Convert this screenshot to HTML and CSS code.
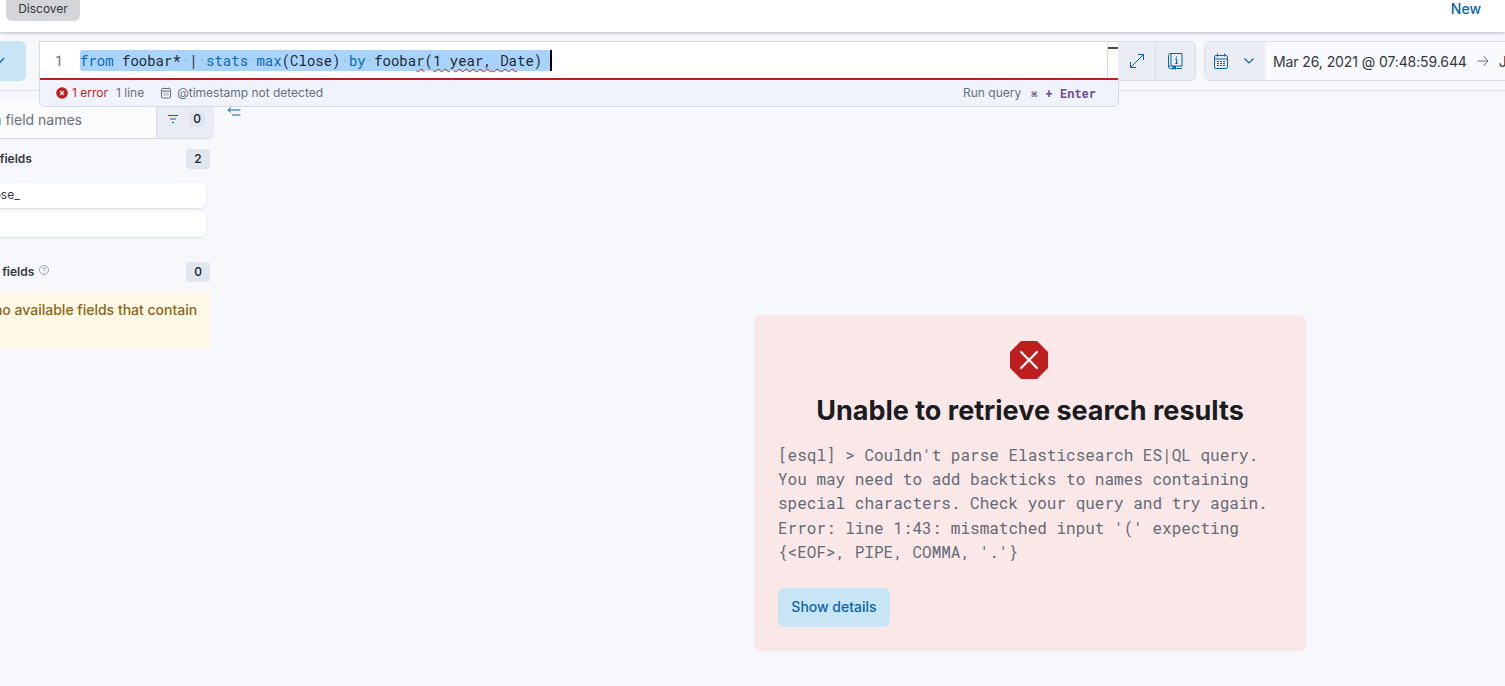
FILE: index.html
```html
<!DOCTYPE html>
<html lang="en">
<head>
<meta charset="utf-8">
<title>Discover</title>
<link rel="stylesheet" href="styles.css">
</head>
<body>
<header class="topbar">
  <span class="crumb">Discover</span>
  <a class="new-link">New</a>
</header>
<section class="toolbar">
  <button class="submit-stub">
    <svg width="16" height="16" viewBox="0 0 16 16"><path d="M1 10l4 4 8-9" fill="none" stroke="#0b64a8" stroke-width="1.2"/></svg>
  </button>
  <div class="editor">
    <div class="editor-main">
      <span class="gutter">1</span>
      <div class="code-wrap">
        <span class="code"><span class="kw">from</span><span class="ws">·</span>foobar*<span class="ws">·</span>|<span class="ws">·</span><span class="kw">stats</span><span class="ws">·</span><span class="kw">max</span>(Close)<span class="ws">·</span><span class="kw">by</span><span class="ws">·</span>fooba<span class="sq">r</span>(<span class="sq">1 year,<span class="ws">·</span>Da</span>te)<span class="ws">·</span></span><span class="caret"></span>
      </div>
      <div class="scroll-track"><span class="scroll-tick"></span></div>
    </div>
    <div class="editor-foot">
      <span class="err">
        <svg width="12" height="12" viewBox="0 0 12 12"><circle cx="6" cy="6" r="5.8" fill="#bd1f1f"/><path d="M4 4l4 4M8 4l-4 4" stroke="#fff" stroke-width="1.2"/></svg>
        1 error
      </span>
      <span class="foot-item">1 line</span>
      <span class="foot-item stamp">
        <svg width="12" height="12" viewBox="0 0 12 12" fill="none" stroke="#69707d"><rect x="1.5" y="1.5" width="9" height="9.5" rx="1"/><path d="M1.5 4h9M3.5 6h1M5.5 6h1M7.5 6h1M3.5 8h1M5.5 8h1M7.5 8h1M3.5.5v1.5M8.5.5v1.5"/></svg>
        @timestamp not detected
      </span>
      <span class="run">Run query <kbd class="keys"><span class="cmd">⌘</span> + Enter</kbd></span>
    </div>
  </div>
  <div class="btn-group">
    <button class="icon-btn wide">
      <svg width="16" height="16" viewBox="0 0 16 16" fill="none" stroke="#0b64a8"><path d="M1.5 14.5L14.5 1.5M9 1.5h5.5V7M1.5 9v5.5H7"/></svg>
    </button>
    <button class="icon-btn">
      <svg width="15" height="17" viewBox="0 0 15 17" fill="none" stroke="#0b64a8"><path d="M3 .5h11v12.500H3zM3 .5C1.500.5.500 1.200.500 2.500v11.500c0 .8.800 1.500 2 1.500h2M8.500 15.500h5.500M.500 14c0-.7 1.200-1 2.500-1"/><path d="M4.500 13h3.500v4l-1.750-1.300L4.500 17z" fill="#0b64a8" stroke="none"/><path d="M8.500 3.500v1.200M8.500 6v4.500M7.200 10.500h2.600M7.200 6h1.300" stroke-width="1.100"/></svg>
    </button>
  </div>
  <div class="date-picker">
    <div class="date-quick">
      <svg width="14" height="16" viewBox="0 0 14 16" fill="none" stroke="#0b64a8"><rect x=".5" y="2.500" width="13" height="13" rx="1.500"/><path d="M.5 6h13M3.500.5v3M10.500.5v3"/><path d="M3 8.500h2M6 8.500h2M9 8.500h2M3 10.500h2M6 10.500h2M9 10.500h2M3 12.500h2M6 12.500h2M9 12.500h2"/></svg>
      <svg width="10" height="6" viewBox="0 0 10 6" fill="none" stroke="#0b64a8" stroke-width="1.200"><path d="M.5.5L5 5 9.500.5"/></svg>
    </div>
    <div class="date-range">
      <span class="date-text">Mar 26, 2021 @ 07:48:59.644</span>
      <svg width="12" height="12" viewBox="0 0 12 12" fill="none" stroke="#69707d"><path d="M.5 6h10.500M6.500 1L11 6l-4.500 5"/></svg>
      <span class="date-text">Jan 1, 2024 @ 00:00:00.000</span>
    </div>
  </div>
</section>
<main class="content">
  <aside class="sidebar">
    <div class="search">
      <span class="search-input">Search field names</span>
      <div class="search-filter">
        <svg width="12" height="10" viewBox="0 0 12 10" fill="none" stroke="#0b64a8"><path d="M1 1.500h10M3 5h6M5 8.500h2"/></svg>
        <span class="filter-count">0</span>
      </div>
    </div>
    <div class="field-head first">
      <span class="field-title">Available fields</span>
      <span class="count-badge">2</span>
    </div>
    <div class="field-row">Close_</div>
    <div class="field-row"></div>
    <div class="field-head second">
      <span class="field-title">Empty fields</span>
      <svg class="help" width="10" height="10" viewBox="0 0 10 10" fill="none" stroke="#98a2b3"><circle cx="5" cy="5" r="4.500"/><path d="M3.700 4c0-1.700 2.700-1.700 2.700 0 0 .9-1.400 1-1.400 2M5 7v.8"/></svg>
      <span class="count-badge">0</span>
    </div>
    <div class="warn">There are no available fields that contain</div>
  </aside>
  <div class="main-pane">
    <svg class="collapse" width="14" height="10" viewBox="0 0 14 10" fill="none" stroke="#0b64a8"><path d="M13.500 3H1M4 .5L1 3l3 2.500M5 8h8.500"/></svg>
    <div class="error-card">
      <svg class="octagon" width="38" height="38" viewBox="0 0 38 38"><path d="M11 0h16l11 11v16L27 38H11L0 27V11z" fill="#bd1f1f"/><path d="M11 11l16 16M27 11L11 27" stroke="#fff" stroke-width="2.200" stroke-linecap="round"/></svg>
      <h1 class="error-title">Unable to retrieve search results</h1>
      <p class="error-body">[esql] &gt; Couldn't parse Elasticsearch ES|QL query.<br>You may need to add backticks to names containing<br>special characters. Check your query and try again.<br>Error: line 1:43: mismatched input '(' expecting<br>{&lt;EOF&gt;, PIPE, COMMA, '.'}</p>
      <button class="details-btn">Show details</button>
    </div>
  </div>
</main>
</body>
</html>
```
FILE: styles.css
```css
* { box-sizing: border-box; }
html, body { height: 100%; }
body {
  margin: 0;
  overflow: hidden;
  background: #f7f8fc;
  font-family: Inter, "Liberation Sans", sans-serif;
  color: #343741;
  display: flex;
  flex-direction: column;
}
button { font-family: inherit; border: 0; padding: 0; }

.topbar {
  height: 32px;
  flex: none;
  background: #fff;
  display: flex;
  justify-content: space-between;
  align-items: flex-start;
  padding: 0 24px 0 6px;
  box-shadow: 0 1px 3px rgba(105, 112, 140, .45);
  position: relative;
  z-index: 2;
}
.crumb {
  width: 74px;
  height: 21px;
  background: #d3d5d9;
  border-radius: 0 0 6px 6px;
  font-size: 12px;
  line-height: 17px;
  text-align: center;
  color: #343741;
}
.new-link {
  font-size: 14px;
  line-height: 18px;
  font-weight: 500;
  color: #0b64a8;
}

.toolbar {
  height: 59px;
  flex: none;
  display: flex;
  align-items: flex-start;
  padding-top: 9px;
  border-bottom: 1px solid #d9dfea;
  position: relative;
  z-index: 3;
}
.submit-stub {
  width: 46px;
  height: 40px;
  margin-left: -20px;
  flex: none;
  border-radius: 6px;
  background: #c8e5f5;
  display: flex;
  align-items: center;
  padding-left: 11px;
}
.editor {
  width: 1080px;
  margin-left: 13px;
  flex: none;
  height: 66px;
  display: flex;
  flex-direction: column;
  border: 1px solid #d3dae6;
  border-radius: 0 0 6px 6px;
  background: #f0f3fb;
  overflow: hidden;
}
.editor-main {
  height: 38px;
  flex: none;
  display: flex;
  background: #fff;
  border-bottom: 2px solid #bd1f1f;
}
.gutter {
  width: 40px;
  flex: none;
  padding-right: 2px;
  text-align: center;
  font: 14px/38px "Roboto Mono", "DejaVu Sans Mono", monospace;
  color: #69707d;
}
.code-wrap {
  flex: 1;
  display: flex;
  align-items: flex-start;
  padding-top: 8px;
  min-width: 0;
}
.code {
  height: 21px;
  margin-right: -1px;
  background: #a8d4fc;
  border-radius: 3px;
  font: 14px/21px "Roboto Mono", "DejaVu Sans Mono", monospace;
  color: #24272e;
  white-space: pre;
}
.kw { color: #0a6ab5; }
.ws { color: #8fb2d2; }
.sq { text-decoration: underline wavy #e0161e 1.2px; text-underline-offset: 2px; }
.caret { width: 2px; height: 21px; background: #000; }
.scroll-track {
  width: 11px;
  flex: none;
  border-left: 1px solid #d9dce3;
  padding-top: 5px;
}
.scroll-tick { display: block; height: 2px; background: #4a4a4a; }

.editor-foot {
  flex: 1;
  display: flex;
  align-items: center;
  padding: 0 22px 1px 16px;
  font-size: 12px;
  color: #69707d;
}
.err { display: flex; align-items: center; gap: 4px; color: #bd1f1f; }
.foot-item { margin-left: 8px; }
.stamp { display: flex; align-items: center; gap: 5px; margin-left: 16px; }
.run { margin-left: auto; display: flex; gap: 10px; }
.keys { font: bold 12px "Roboto Mono", "DejaVu Sans Mono", monospace; color: #6b4f8e; }
.cmd { display: inline-block; width: 7.200px; font-size: 10px; }

.btn-group {
  flex: none;
  width: 78px;
  height: 40px;
  display: flex;
  margin-left: -1px;
  background: #e9edf3;
  border: 1px solid #d9dfea;
  border-left: 0;
  border-radius: 0 6px 6px 0;
}
.icon-btn {
  flex: 1;
  background: transparent;
  display: flex;
  align-items: center;
  justify-content: center;
  border-left: 1px solid #d9dfea;
}
.icon-btn.wide { width: 37px; flex: none; border-left: 0; }

.date-picker {
  flex: none;
  width: 400px;
  height: 40px;
  margin-left: 8px;
  display: flex;
  border: 1px solid #d9dfea;
  border-radius: 6px 0 0 6px;
  background: #f9fafd;
}
.date-quick {
  width: 60px;
  flex: none;
  background: #e9edf3;
  border-radius: 6px 0 0 6px;
  display: flex;
  align-items: center;
  gap: 16px;
  padding-left: 9px;
}
.date-range {
  display: flex;
  align-items: center;
  gap: 10px;
  padding-left: 8px;
  white-space: nowrap;
  font-size: 14px;
  letter-spacing: -.1px;
  color: #343741;
}
.date-range svg { flex: none; }

.content { flex: 1; display: flex; min-height: 0; }
.sidebar {
  width: 304px;
  margin-left: -90px;
  flex: none;
  padding-top: 9px;
}
.search {
  height: 39px;
  display: flex;
  background: #fbfcfd;
  border-bottom: 1px solid #d3dae6;
  border-radius: 0 0 6px 0;
  overflow: hidden;
}
.search-input {
  flex: 1;
  padding-left: 45px;
  font-size: 14px;
  line-height: 39px;
  color: #69707d;
  white-space: nowrap;
}
.search-filter {
  width: 58px;
  flex: none;
  background: #e9edf3;
  border-left: 1px solid #d3dae6;
  display: flex;
  align-items: center;
  justify-content: flex-end;
  gap: 10px;
}
.filter-count {
  width: 16px;
  height: 16px;
  border-radius: 3px;
  background: #e0e5ee;
  text-align: center;
  font-size: 12px;
  font-weight: 500;
  line-height: 16px;
  color: #1a1c21;
  margin-right: 9px;
}
.field-head {
  display: flex;
  align-items: center;
  height: 20px;
  margin-right: 4px;
  font-size: 12px;
  font-weight: 600;
}
.field-head.first { margin-top: 10px; padding-left: 34px; }
.field-head.second { margin-top: 25px; padding-left: 52px; }
.field-title { white-space: nowrap; margin-bottom: 2px; }
.help { margin-left: 5px; margin-top: -4px; }
.count-badge {
  margin-left: auto;
  width: 24px;
  height: 20px;
  border-radius: 3px;
  background: #e0e5ee;
  text-align: center;
  font-size: 12px;
  font-weight: 500;
  line-height: 20px;
  color: #1a1c21;
}
.field-row {
  height: 25px;
  margin-right: 8px;
  background: #fff;
  border-radius: 6px;
  box-shadow: 0 1px 2px rgba(105, 112, 140, .2);
  font-size: 12px;
  line-height: 23px;
  padding-left: 72px;
  color: #343741;
}
.field-head.first + .field-row { margin-top: 14px; }
.field-row + .field-row { margin-top: 4px; }
.warn {
  height: 56px;
  margin: 10px 4px 0 0;
  background: #fef8e6;
  color: #8a6714;
  font-size: 14px;
  font-weight: 500;
  line-height: 20px;
  padding: 8px 0 0 16px;
  white-space: nowrap;
}

.main-pane {
  flex: 1;
  min-width: 0;
  display: flex;
  flex-direction: column;
  align-items: flex-start;
}
.collapse { margin: 16px 0 0 13px; flex: none; }
.error-card {
  width: 552px;
  height: 336px;
  margin: 198px 0 0 540px;
  padding: 26px 24px 24px;
  background: #f9e8e7;
  border-radius: 6px;
  display: flex;
  flex-direction: column;
  align-items: flex-start;
}
.octagon { align-self: center; flex: none; margin-right: 2px; }
.error-title {
  align-self: center;
  margin: 14px 0 0;
  font-size: 27px;
  line-height: 36px;
  font-weight: 700;
  color: #1a1c21;
  white-space: nowrap;
}
.error-body {
  margin: 14px 0 0;
  font: 16px/24.200px "Roboto Mono", "DejaVu Sans Mono", monospace;
  color: #646a77;
  white-space: nowrap;
}
.details-btn {
  margin-top: 23.500px;
  width: 112px;
  height: 40px;
  padding-bottom: 1px;
  border-radius: 6px;
  background: #c8e5f5;
  color: #0b64a8;
  font-size: 14px;
  font-weight: 500;
}
```
